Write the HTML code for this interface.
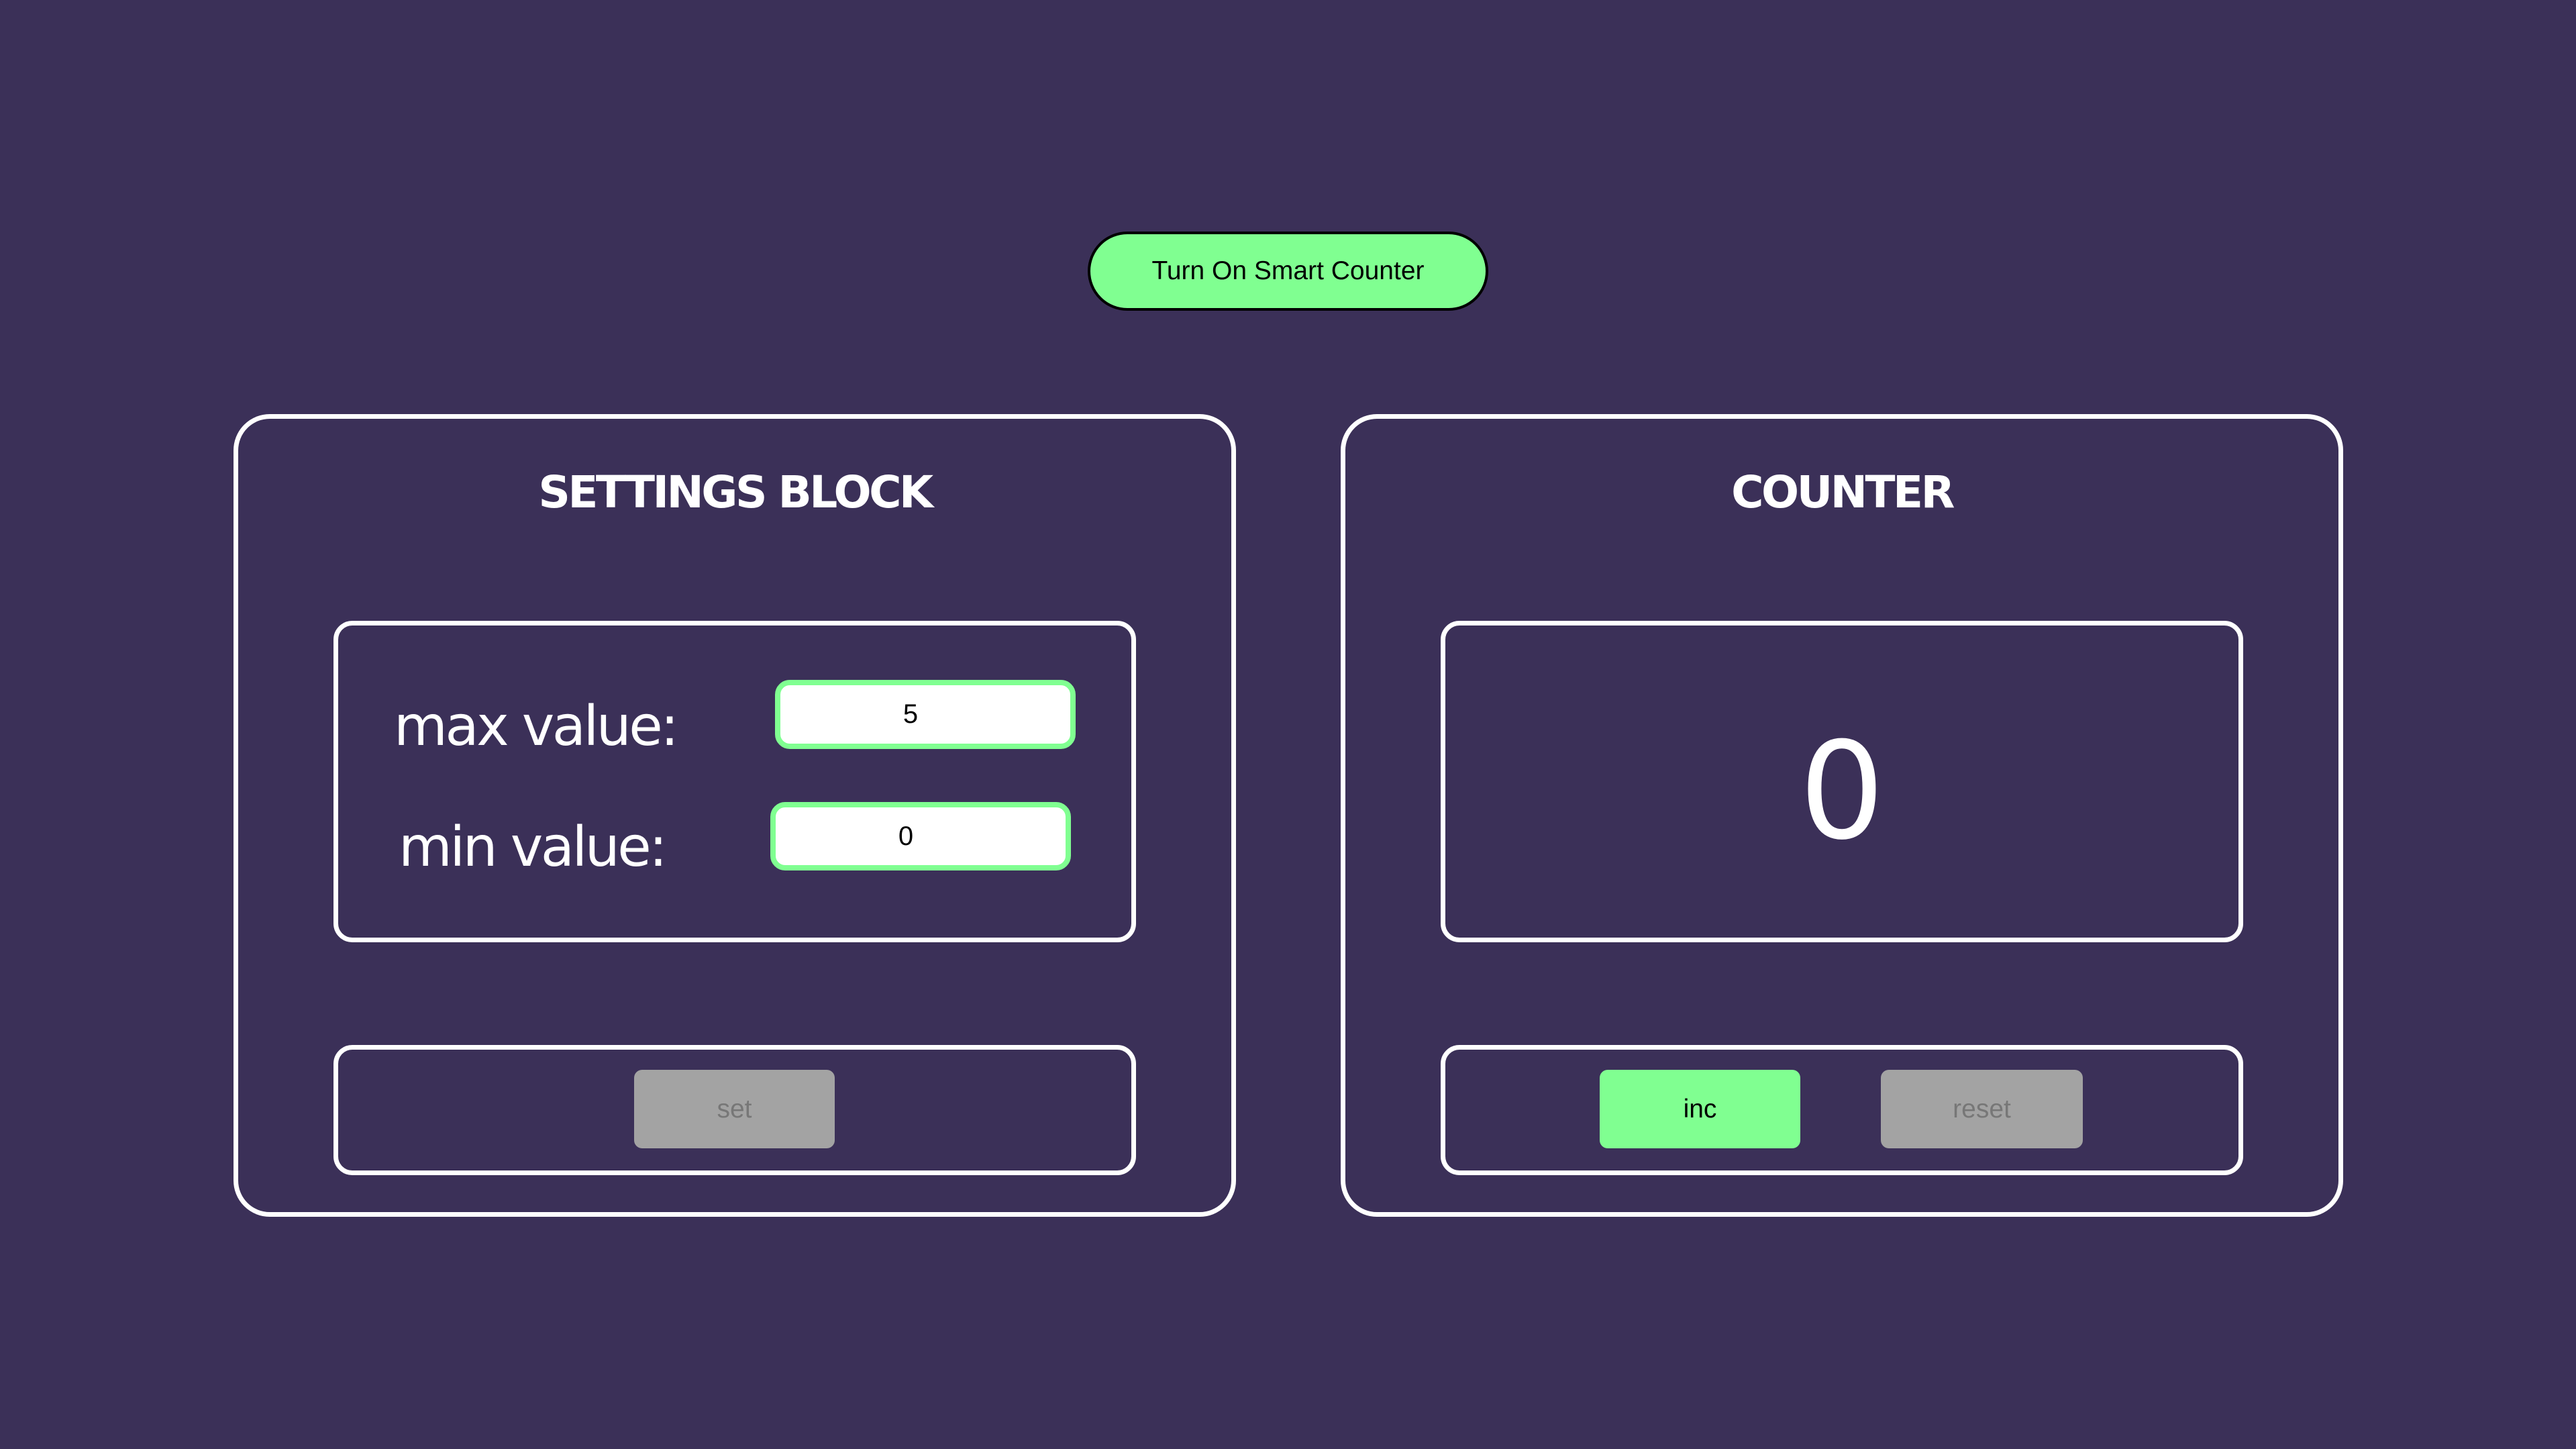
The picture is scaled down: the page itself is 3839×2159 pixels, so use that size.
<!DOCTYPE html>
<html><head><style>
body{margin:0;width:3839px;height:2159px;background:#3b3058;position:relative;overflow:hidden;font-family:"Liberation Sans",sans-serif;}
.a{position:absolute;box-sizing:border-box;}
.box{border:7px solid #fff;border-radius:54px;}
.ib{border:7px solid #fff;border-radius:28px;}
.t{color:#fff;font-family:"DejaVu Sans","Liberation Sans",sans-serif;font-weight:bold;font-size:66px;text-align:center;letter-spacing:-3.5px;}
.lab{color:#fff;font-family:"DejaVu Sans","Liberation Sans",sans-serif;font-size:82px;letter-spacing:-3.5px;}
.inp{background:#fff;border:8px solid #80ff91;border-radius:22px;font-size:40px;color:#000;display:flex;align-items:center;justify-content:center;padding-right:44px;}
.btn{border-radius:12px;font-size:39px;display:flex;align-items:center;justify-content:center;}
</style></head><body>
<div class="a" style="left:1621px;top:345px;width:597px;height:118px;background:#80ff91;border:4px solid #000;border-radius:60px;font-size:39px;display:flex;align-items:center;justify-content:center;">Turn On Smart Counter</div>

<div class="a box" style="left:348px;top:617px;width:1494px;height:1196px;"></div>
<div class="a t" style="left:348px;top:695px;width:1494px;">SETTINGS BLOCK</div>
<div class="a ib" style="left:497px;top:925px;width:1196px;height:479px;"></div>
<div class="a lab" style="left:587px;top:1035px;">max value:</div>
<div class="a lab" style="left:594px;top:1215px;">min value:</div>
<div class="a inp" style="left:1155px;top:1013px;width:448px;height:103px;">5</div>
<div class="a inp" style="left:1148px;top:1195px;width:448px;height:102px;">0</div>
<div class="a ib" style="left:497px;top:1557px;width:1196px;height:194px;"></div>
<div class="a btn" style="left:945px;top:1594px;width:299px;height:117px;background:#a3a3a3;color:#777;">set</div>

<div class="a box" style="left:1998px;top:617px;width:1494px;height:1196px;"></div>
<div class="a t" style="left:1998px;top:695px;width:1494px;">COUNTER</div>
<div class="a ib" style="left:2147px;top:925px;width:1196px;height:479px;"></div>
<div class="a" style="left:2147px;top:1065px;width:1196px;text-align:center;color:#fff;font-family:'DejaVu Sans','Liberation Sans',sans-serif;font-size:200px;line-height:230px;">0</div>
<div class="a ib" style="left:2147px;top:1557px;width:1196px;height:194px;"></div>
<div class="a btn" style="left:2384px;top:1594px;width:299px;height:117px;background:#80ff91;color:#000;">inc</div>
<div class="a btn" style="left:2803px;top:1594px;width:301px;height:117px;background:#a3a3a3;color:#777;">reset</div>
</body></html>
